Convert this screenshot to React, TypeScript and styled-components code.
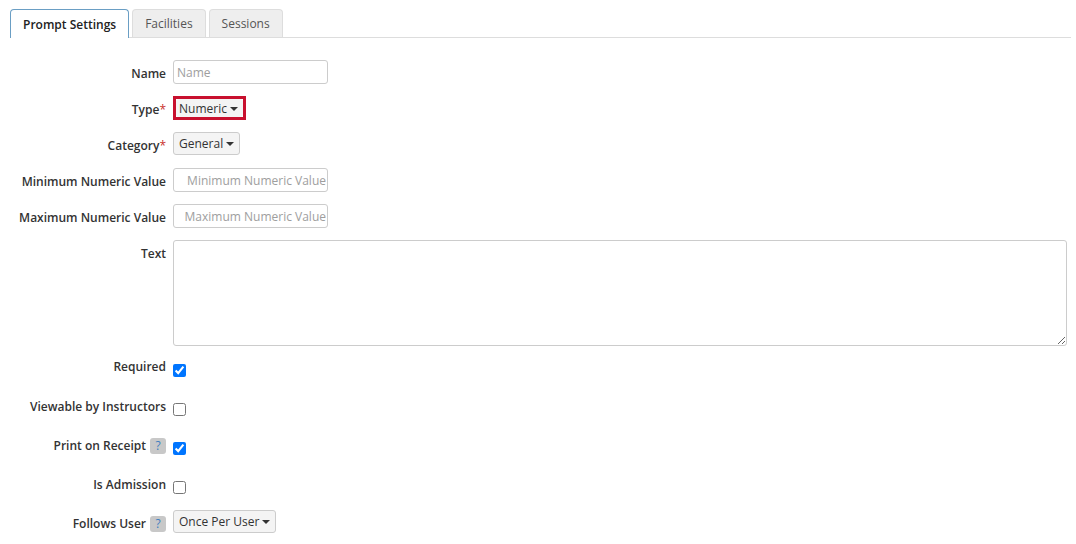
import React from "react";
import styled, { createGlobalStyle } from "styled-components";

const GlobalStyle = createGlobalStyle`
  body {
    margin: 0;
    background: #fff;
    font-family: "Open Sans", "Liberation Sans", sans-serif;
    color: #333;
  }
`;

const Page = styled.div`
  padding: 9px 5px 0 10px;
  width: 1076px;
  height: 544px;
  box-sizing: border-box;
  overflow: hidden;
`;

const TabBar = styled.div`
  display: flex;
  gap: 3px;
  border-bottom: 1px solid #ddd;
  height: 28px;
`;

const Tab = styled.div<{ $active?: boolean }>`
  height: ${(p) => (p.$active ? "29px" : "28px")};
  box-sizing: border-box;
  padding: 0 12px;
  display: flex;
  align-items: center;
  font-size: 12px;
  font-weight: ${(p) => (p.$active ? 600 : 400)};
  color: ${(p) => (p.$active ? "#222" : "#555")};
  background: ${(p) => (p.$active ? "#fff" : "#eee")};
  border: 1px solid ${(p) => (p.$active ? "#6a9ec4" : "#ddd")};
  border-bottom: none;
  border-radius: 4px 4px 0 0;
`;

const Form = styled.div`
  padding-top: 22px;
  display: flex;
  flex-direction: column;
`;

const Row = styled.div<{ $gap: number }>`
  display: flex;
  gap: 7px;
  min-height: 24px;
  margin-bottom: ${(p) => p.$gap}px;
`;

const Label = styled.div<{ $top: number }>`
  width: 156px;
  flex: none;
  text-align: right;
  font-size: 12px;
  font-weight: 600;
  line-height: 18px;
  padding-top: ${(p) => p.$top}px;
  color: #333;
  display: flex;
  justify-content: flex-end;
  align-items: flex-start;
  gap: 4px;
`;

const Star = styled.span`
  color: #c9302c;
  font-weight: 400;
`;

const Help = styled.span`
  display: inline-flex;
  align-items: center;
  justify-content: center;
  width: 16px;
  height: 16px;
  margin-top: 1px;
  border-radius: 3px;
  background: #c8c8c8;
  color: #3f7fc0;
  font-size: 12px;
  font-weight: 400;
`;

const TextInput = styled.input<{ $right?: boolean }>`
  width: 155px;
  height: 24px;
  box-sizing: border-box;
  border: 1px solid #ccc;
  border-radius: 3px;
  padding: 0 ${(p) => (p.$right ? "1px" : "3px")} 0 3px;
  font-family: "Open Sans", "Liberation Sans", sans-serif;
  font-size: 12px;
  text-align: ${(p) => (p.$right ? "right" : "left")};
  outline: none;
  &::placeholder {
    color: #9e9e9e;
  }
`;

const TextArea = styled.textarea`
  flex: 1;
  height: 106px;
  box-sizing: border-box;
  border: 1px solid #ccc;
  border-radius: 3px;
  margin: 0 4px 0 0;
  font-family: "Open Sans", "Liberation Sans", sans-serif;
  font-size: 12px;
  outline: none;
`;

const Highlight = styled.div`
  border: 3px solid #c8102e;
  height: 24px;
  box-sizing: border-box;
  display: flex;
`;

const Select = styled.div<{ $bare?: boolean }>`
  height: ${(p) => (p.$bare ? "18px" : "23px")};
  box-sizing: border-box;
  display: inline-flex;
  align-items: center;
  gap: 3px;
  padding: 0 5px 0 ${(p) => (p.$bare ? "3px" : "5px")};
  background: #f4f4f4;
  border: ${(p) => (p.$bare ? "none" : "1px solid #ccc")};
  border-radius: 3px;
  font-size: 12px;
  color: #333;
  &::after {
    content: "";
    border-left: 4px solid transparent;
    border-right: 4px solid transparent;
    border-top: 4px solid #333;
    margin-top: 1px;
  }
`;

const Check = styled.input`
  width: 13px;
  height: 13px;
  margin: 6px 0 0;
  accent-color: #0075ff;
`;

export default function App() {
  return (
    <>
      <GlobalStyle />
      <Page>
        <TabBar>
          <Tab $active>Prompt Settings</Tab>
          <Tab>Facilities</Tab>
          <Tab>Sessions</Tab>
        </TabBar>
        <Form>
          <Row $gap={12}>
            <Label $top={5}>Name</Label>
            <TextInput placeholder="Name" />
          </Row>
          <Row $gap={12}>
            <Label $top={5}>
              <span>
                Type<Star>*</Star>
              </span>
            </Label>
            <Highlight>
              <Select $bare>Numeric</Select>
            </Highlight>
          </Row>
          <Row $gap={12}>
            <Label $top={5}>
              <span>
                Category<Star>*</Star>
              </span>
            </Label>
            <Select>General</Select>
          </Row>
          <Row $gap={12}>
            <Label $top={5}>Minimum Numeric Value</Label>
            <TextInput $right placeholder="Minimum Numeric Value" />
          </Row>
          <Row $gap={12}>
            <Label $top={5}>Maximum Numeric Value</Label>
            <TextInput $right placeholder="Maximum Numeric Value" />
          </Row>
          <Row $gap={12}>
            <Label $top={5}>Text</Label>
            <TextArea />
          </Row>
          <Row $gap={15}>
            <Label $top={0}>Required</Label>
            <Check type="checkbox" defaultChecked />
          </Row>
          <Row $gap={15}>
            <Label $top={1}>Viewable by Instructors</Label>
            <Check type="checkbox" />
          </Row>
          <Row $gap={15}>
            <Label $top={1}>
              Print on Receipt <Help>?</Help>
            </Label>
            <Check type="checkbox" defaultChecked />
          </Row>
          <Row $gap={11}>
            <Label $top={1}>Is Admission</Label>
            <Check type="checkbox" />
          </Row>
          <Row $gap={0}>
            <Label $top={5}>
              Follows User <Help>?</Help>
            </Label>
            <Select>Once Per User</Select>
          </Row>
        </Form>
      </Page>
    </>
  );
}
